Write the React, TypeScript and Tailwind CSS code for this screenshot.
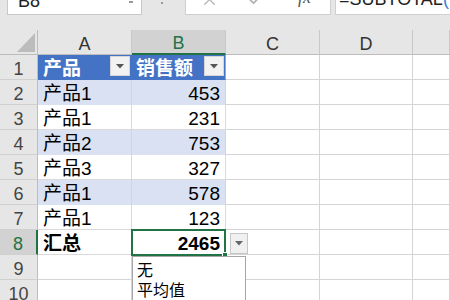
import { X, Check } from 'lucide-react';

const font = "font-['Liberation_Sans','Noto_Sans_CJK_SC',sans-serif]";

const cols = ['A', 'B', 'C', 'D', ''];

const data = [
  { a: '产品1', b: '453' },
  { a: '产品1', b: '231' },
  { a: '产品2', b: '753' },
  { a: '产品3', b: '327' },
  { a: '产品1', b: '578' },
  { a: '产品1', b: '123' },
];

function FilterButton() {
  return (
    <div className="mr-px mb-[2px] flex h-[20px] w-[20px] shrink-0 items-center justify-center self-center bg-[#f2f2f2] border border-[#d6d6d6]">
      <svg width="8" height="5" viewBox="0 0 8 5">
        <polygon points="0,0 8,0 4,4.5" fill="#555" />
      </svg>
    </div>
  );
}

function RowHead({ n, active }: { n: number; active?: boolean }) {
  return (
    <div
      className={`flex h-[25px] items-end justify-center border-b border-[#d0d0d0] text-[18px] leading-[20px] ${
        active ? 'bg-[#d2d2d2] text-[#217346] border-r-2 border-r-[#217346]' : 'bg-[#e6e6e6] text-[#444] border-r border-r-[#bdbdbd]'
      }`}
    >
      {n}
    </div>
  );
}

function Empty({ bottom }: { bottom?: string }) {
  return <div className={`h-[25px] border-r border-b border-r-[#d4d4d4] ${bottom ?? 'border-b-[#d4d4d4]'}`} />;
}

export default function App() {
  return (
    <div className={`h-[300px] w-[450px] overflow-hidden bg-white text-black ${font}`}>
      {/* formula bar */}
      <div className="flex h-[30px] items-start bg-[#e6e6e6]">
        <div className="ml-[7px] flex h-[15px] w-[135px] justify-between overflow-hidden border-x border-b border-[#c8c8c8] bg-white pl-[10px] pr-[8px]">
          <span className="-mt-[9px] text-[18px] leading-[20px] text-[#222]">B8</span>
          <span className="mt-[1px] h-[2px] w-[4px] bg-[#999]" />
        </div>
        <div className="ml-[19px] mt-[2px] h-[2px] w-[2px] bg-[#9a9a9a]" />
        <div className="ml-[22px] relative h-[15px] w-[146px] overflow-hidden border-x border-b border-[#d0d0d0] bg-white">
          <X className="absolute left-[14px] -top-[10px] text-[#b4b4b4]" size={19} strokeWidth={1.6} />
          <Check className="absolute left-[60px] -top-[11px] text-[#b4b4b4]" size={20} strokeWidth={2.2} />
          <span className="absolute left-[112px] -top-[13px] font-['Liberation_Serif',serif] text-[18px] italic leading-[20px] text-[#555]">
            fx
          </span>
        </div>
        <div className="ml-[4px] h-[15px] flex-1 overflow-hidden border-l border-b border-[#d0d0d0] bg-white pl-[3px]">
          <span className="-mt-[11px] block text-[18px] leading-[20px] text-[#222]">
            =SUBTOTAL<span className="text-[#3b7fd1]">(</span>
          </span>
        </div>
      </div>

      {/* sheet */}
      <div className="grid grid-cols-[38px_94px_94px_94px_93px_1fr]">
        {/* column headers */}
        <div className="relative h-[25px] border-r border-b border-[#bdbdbd] bg-[#e6e6e6]">
          <svg className="absolute left-[17px] top-[3px]" width="18" height="19" viewBox="0 0 18 19">
            <polygon points="18,0 18,19 0,19" fill="#bcbcbc" />
          </svg>
        </div>
        {cols.map((c) => (
          <div
            key={c || 'e'}
            className={`flex h-[25px] items-end justify-center border-r border-r-[#c8c8c8] text-[18px] leading-[20px] ${
              c === 'B'
                ? 'bg-[#d2d2d2] text-[#217346] border-b-2 border-b-[#217346]'
                : 'bg-[#e6e6e6] text-[#333] border-b border-b-[#bdbdbd]'
            }`}
          >
            {c}
          </div>
        ))}

        {/* row 1: table header */}
        <RowHead n={1} />
        <div className="flex h-[25px] items-end justify-between border-r border-b border-[#4472c4] bg-[#4472c4] pl-[5px] text-[19px] font-bold leading-[20px] text-white">
          <span>产品</span>
          <FilterButton />
        </div>
        <div className="flex h-[25px] items-end justify-between border-r border-b border-r-[#8ea9db] border-b-[#4472c4] bg-[#4472c4] pl-[4px] text-[19px] font-bold leading-[20px] text-white">
          <span>销售额</span>
          <FilterButton />
        </div>
        <Empty />
        <Empty />
        <Empty />

        {/* data rows */}
        {data.map((r, i) => {
          const band = i % 2 === 0;
          const last = i === data.length - 1;
          const rowCls = band
            ? 'bg-[#d9e1f2] border-r-[#c9d5ec] border-b-[#d9e1f2]'
            : 'bg-white border-r-[#d9d9d9] border-b-[#d9d9d9]';
          return [
            <RowHead key={`h${i}`} n={i + 2} />,
            <div
              key={`a${i}`}
              className={`flex h-[25px] items-end border-r border-b pl-[5px] text-[19px] leading-[20px] ${rowCls} ${
                last ? 'border-b-[#4472c4]' : ''
              }`}
            >
              {r.a}
            </div>,
            <div
              key={`b${i}`}
              className={`flex h-[25px] items-end justify-end border-r border-b pr-[5px] text-[19px] leading-[20px] ${rowCls} ${
                last ? 'border-b-[#4472c4]' : ''
              }`}
            >
              {r.b}
            </div>,
            <Empty key={`c${i}`} />,
            <Empty key={`d${i}`} />,
            <Empty key={`e${i}`} />,
          ];
        })}

        {/* row 8: total */}
        <RowHead n={8} active />
        <div className="flex h-[25px] items-end border-r border-b border-[#d9d9d9] pl-[5px] text-[19px] font-bold leading-[20px]">
          汇总
        </div>
        <div className="relative flex h-[25px] items-end justify-end border-r border-b border-[#d9d9d9] pr-[5px] text-[19px] font-bold leading-[20px]">
          2465
          <div className="pointer-events-none absolute -left-px -top-px z-10 h-[27px] w-[95px] border-2 border-[#217346]">
            <div className="absolute -bottom-[4px] -right-[4px] h-[6px] w-[6px] border border-white bg-[#217346]" />
          </div>
          <div className="absolute left-[98px] top-[3px] z-10 flex h-[21px] w-[18px] items-center justify-center border border-[#c6c6c6] bg-[#f0f0f0]">
            <svg width="8" height="5" viewBox="0 0 8 5">
              <polygon points="0,0 8,0 4,4.5" fill="#666" />
            </svg>
          </div>
          <div className="absolute left-0 top-[26px] z-10 h-[60px] w-[114px] border border-[#a6a6a6] bg-white pl-[4px] pt-[4px] text-left text-[16px] font-normal leading-[20px] text-black">
            <div>无</div>
            <div>平均值</div>
          </div>
        </div>
        <Empty />
        <Empty />
        <Empty />

        {/* rows 9-10 */}
        {[9, 10].map((n) => [
          <RowHead key={`h${n}`} n={n} />,
          <Empty key={`a${n}`} />,
          <Empty key={`b${n}`} />,
          <Empty key={`c${n}`} />,
          <Empty key={`d${n}`} />,
          <Empty key={`e${n}`} />,
        ])}
      </div>
    </div>
  );
}
